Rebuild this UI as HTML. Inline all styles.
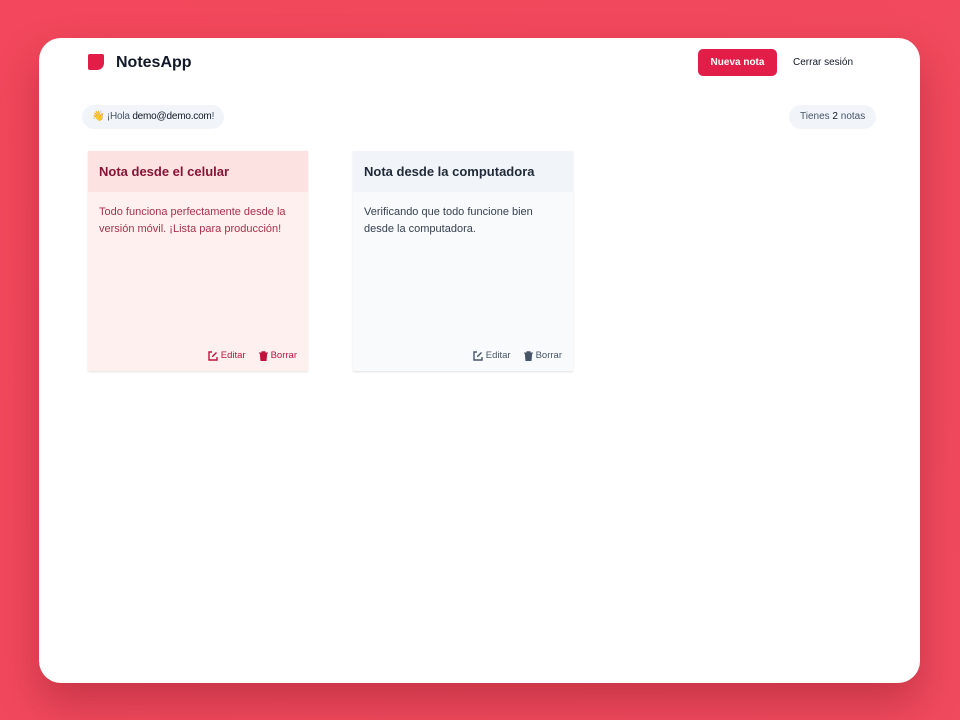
<!DOCTYPE html>
<html><head><meta charset="utf-8"><style>
*{box-sizing:border-box;margin:0;padding:0}
body{width:960px;height:720px;overflow:hidden;background:linear-gradient(135deg,#f2475c,#f04a5e);font-family:"Liberation Sans","Noto Sans CJK SC",sans-serif;position:relative}
.win{position:absolute;left:39px;top:38px;width:881px;height:645px;background:#fff;border-radius:22px;box-shadow:0 20px 40px rgba(120,20,30,.35)}
.logo{position:absolute;left:49px;top:16px;width:16px;height:16px;background:#e11d48;border-radius:2px 2px 7px 2px}
.brand{position:absolute;left:77px;top:16px;font-size:16px;font-weight:bold;color:#111827}
.btn{position:absolute;left:659px;top:11px;width:79px;height:27px;background:#e11d48;color:#fff;border-radius:5px;font-size:10px;font-weight:bold;text-align:center;line-height:27px}
.out{position:absolute;left:754px;top:19px;font-size:10px;color:#111827}
.pill{position:absolute;height:24px;border-radius:12px;background:#f1f5f9;font-size:10px;color:#475569;line-height:24px;padding:0 11px}
.pill b{font-weight:normal;color:#111827}
.note{position:absolute;top:113px;width:220px;height:220px;box-shadow:0 1px 2px rgba(0,0,0,.12)}
.nh{height:41px;padding:0 11px;line-height:41px;font-size:13px;font-weight:bold}
.nb{padding:12px 11px;font-size:11px;line-height:17px}
.na{position:absolute;right:11px;bottom:10px;font-size:9.5px;display:flex;gap:13px;align-items:center}
.na span{display:flex;align-items:center;gap:3px}
</style></head><body>
<div class="win">
<div class="logo"></div><div class="brand">NotesApp</div>
<div class="btn">Nueva nota</div><div class="out">Cerrar sesión</div>
<div class="pill" style="left:43px;top:67px;padding:0 10px 0 10px;letter-spacing:-0.2px">👋 ¡Hola <b>demo@demo.com</b>!</div>
<div class="pill" style="left:750px;top:67px">Tienes <b>2</b> notas</div>
<div class="note" style="left:49px;background:#fff0f0;color:#a8324a">
<div class="nh" style="background:#fde2e2;color:#881337">Nota desde el celular</div>
<div class="nb">Todo funciona perfectamente desde la versión móvil. ¡Lista para producción!</div>
<div class="na" style="color:#be123c"><span><svg width="10" height="10" viewBox="0 0 10 10"><path d="M4 1H1v8h8V6" fill="none" stroke="currentColor" stroke-width="1.4"/><path d="M8 1l1 1-4 4H4V5z" fill="currentColor"/></svg>Editar</span><span><svg width="9" height="10" viewBox="0 0 9 10"><path d="M0 2h9M3 2V0.7h3V2M1.3 2.5h6.4L7 10H2z" fill="currentColor" stroke="currentColor" stroke-width="1"/></svg>Borrar</span></div>
</div>
<div class="note" style="left:314px;background:#f8fafc;color:#374151">
<div class="nh" style="background:#f1f5f9;color:#1f2937">Nota desde la computadora</div>
<div class="nb">Verificando que todo funcione bien desde la computadora.</div>
<div class="na" style="color:#475569"><span><svg width="10" height="10" viewBox="0 0 10 10"><path d="M4 1H1v8h8V6" fill="none" stroke="currentColor" stroke-width="1.4"/><path d="M8 1l1 1-4 4H4V5z" fill="currentColor"/></svg>Editar</span><span><svg width="9" height="10" viewBox="0 0 9 10"><path d="M0 2h9M3 2V0.7h3V2M1.3 2.5h6.4L7 10H2z" fill="currentColor" stroke="currentColor" stroke-width="1"/></svg>Borrar</span></div>
</div>
</div>
</body></html>
